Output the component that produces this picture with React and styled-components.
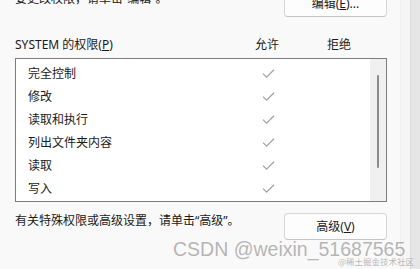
import React from 'react'
import styled, { createGlobalStyle } from 'styled-components'

const GlobalStyle = createGlobalStyle`
  html, body {
    margin: 0;
    padding: 0;
    background: #f9f9f9;
  }
  body {
    font-family: "Segoe UI", "Noto Sans", "Noto Sans CJK SC", sans-serif;
    font-size: 12px;
    color: #1a1a1a;
  }
`

const permissions = ['完全控制', '修改', '读取和执行', '列出文件夹内容', '读取', '写入']

const Check = () => (
  <svg width="13" height="10" viewBox="0 0 13 10">
    <path d="M1 4.6 L4.6 8.2 L12 0.8" fill="none" stroke="#a3a3a3" strokeWidth="1.3" />
  </svg>
)

const App = () => {
  return (
    <>
      <GlobalStyle />
      <Screen>
        <Dialog>
          <TopRow>
            <Hint>要更改权限，请单击“编辑”。</Hint>
            <Button>编辑(<u>E</u>)...</Button>
          </TopRow>

          <HeaderRow>
            <span>SYSTEM 的权限(<u>P</u>)</span>
            <ColHead>允许</ColHead>
            <ColHead>拒绝</ColHead>
          </HeaderRow>

          <ListBox>
            <Rows>
              {permissions.map((p) => (
                <Row key={p}>
                  <span>{p}</span>
                  <Cell><Check /></Cell>
                  <Cell />
                </Row>
              ))}
            </Rows>
            <ScrollTrack>
              <Thumb />
            </ScrollTrack>
          </ListBox>

          <BottomRow>
            <Hint>有关特殊权限或高级设置，请单击“高级”。</Hint>
            <Button $tall>高级(<u>V</u>)</Button>
          </BottomRow>
        </Dialog>
        <FrameStrip />
        <FrameEdge />

        <Watermark>CSDN @weixin_51687565</Watermark>
        <SmallMark>@稀土掘金技术社区</SmallMark>
      </Screen>
    </>
  )
}

export default App

const Screen = styled.div`
  position: relative;
  display: flex;
  width: 420px;
  height: 269px;
  overflow: hidden;
  background: #f9f9f9;
`

const Dialog = styled.div`
  display: flex;
  flex-direction: column;
  width: 400px;
  flex-shrink: 0;
  box-sizing: border-box;
  padding: 0 13px 0 15px;
`

const FrameStrip = styled.div`
  width: 10px;
  flex-shrink: 0;
  background: #f6f6f6;
  border-left: 1px solid #efefef;
  box-sizing: border-box;
`

const FrameEdge = styled.div`
  flex: 1;
  background: #e6e6e6;
  border-left: 1px solid #dadada;
`

const TopRow = styled.div`
  display: flex;
  justify-content: space-between;
  align-items: flex-start;
  margin-top: -9px;
  height: 26px;
  flex-shrink: 0;
`

const Hint = styled.span`
  line-height: 16px;
  white-space: nowrap;
`

const Button = styled.div`
  width: 103px;
  height: ${(p) => (p.$tall ? '27px' : '26px')};
  box-sizing: border-box;
  display: flex;
  align-items: center;
  justify-content: center;
  background: #fdfdfd;
  border: 1px solid #d6d6d6;
  border-bottom-color: #c4c4c4;
  border-radius: 4px;
  line-height: 16px;
  flex-shrink: 0;
`

const HeaderRow = styled.div`
  display: grid;
  grid-template-columns: 1fr 48px 48px;
  column-gap: 24px;
  padding-right: 24px;
  margin-top: 20px;
  height: 16px;
  line-height: 16px;
  flex-shrink: 0;
`

const ColHead = styled.span`
  text-align: center;
`

const ListBox = styled.div`
  display: flex;
  margin-top: 5px;
  height: 144px;
  box-sizing: border-box;
  border: 1px solid #7d7d7d;
  background: #ffffff;
  flex-shrink: 0;
  overflow: hidden;
`

const Rows = styled.div`
  flex: 1;
  padding-top: 3px;
`

const Row = styled.div`
  display: grid;
  grid-template-columns: 1fr 48px 48px;
  column-gap: 24px;
  padding: 0 6px 0 12px;
  height: 23px;
  align-items: center;
  line-height: 16px;
`

const Cell = styled.div`
  display: flex;
  justify-content: center;
  align-items: center;
`

const ScrollTrack = styled.div`
  width: 16px;
  background: #f0f0f0;
  display: flex;
  justify-content: center;
  padding-top: 16px;
  box-sizing: border-box;
`

const Thumb = styled.div`
  width: 2px;
  height: 93px;
  border-radius: 1px;
  background: #8a8a8a;
`

const BottomRow = styled.div`
  display: flex;
  justify-content: space-between;
  align-items: flex-start;
  margin-top: 11px;
  flex-shrink: 0;
`

const Watermark = styled.div`
  position: absolute;
  left: 173px;
  top: 238px;
  font-family: "Liberation Sans", Arial, sans-serif;
  font-size: 19.5px;
  line-height: 22px;
  color: rgba(150, 150, 150, 0.7);
  white-space: nowrap;
`

const SmallMark = styled.div`
  position: absolute;
  left: 338px;
  top: 256px;
  font-family: "Noto Sans CJK SC", sans-serif;
  font-size: 8.5px;
  line-height: 11px;
  color: rgba(160, 160, 160, 0.75);
  white-space: nowrap;
`
